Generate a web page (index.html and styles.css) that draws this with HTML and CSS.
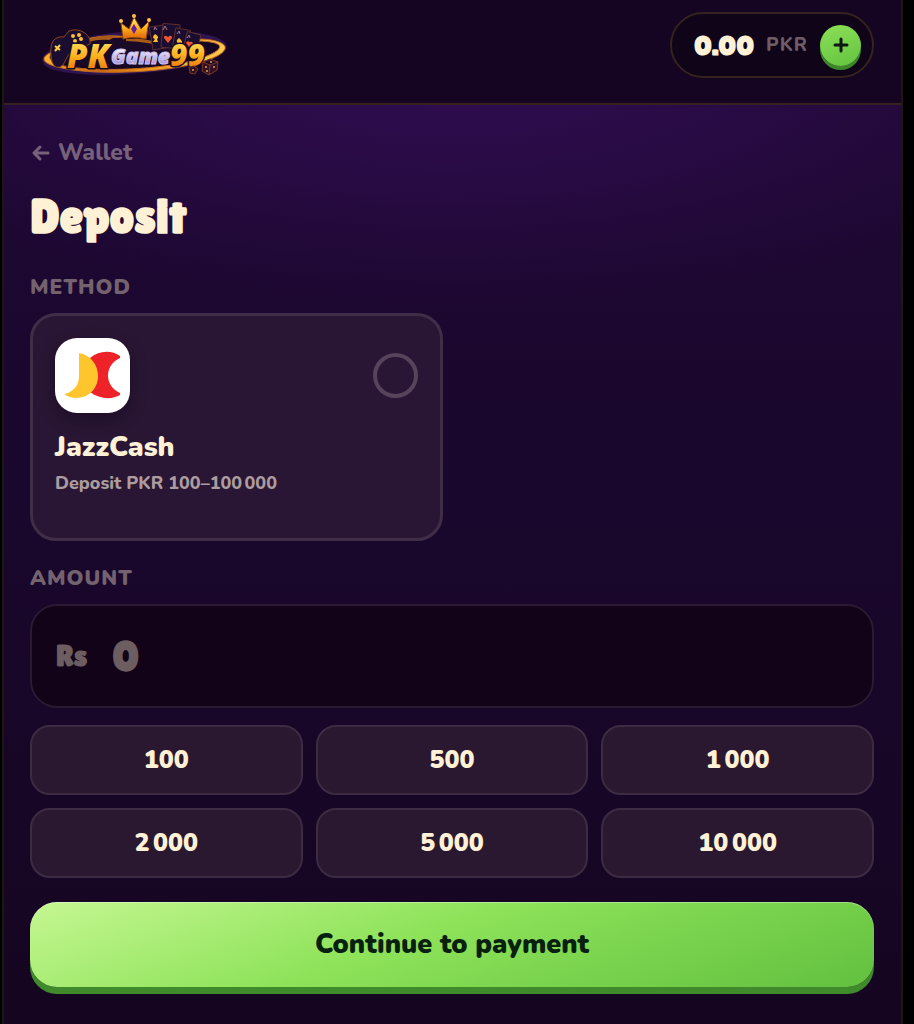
FILE: index.html
```html
<!DOCTYPE html>
<html lang="en">
<head>
<meta charset="utf-8">
<meta name="viewport" content="width=device-width, initial-scale=1">
<title>Deposit – PKGame99</title>
<link rel="stylesheet" href="styles.css">
</head>
<body>
<div class="shell">
  <header class="topbar">
    <a class="brand" href="#" aria-label="PKGame99">
      <svg class="brand-logo" viewBox="0 0 210 80" role="img" aria-hidden="true">
        <defs>
          <linearGradient id="gold" x1="0" y1="0" x2="0" y2="1">
            <stop offset="0.1" stop-color="#ffe56a"/><stop offset=".5" stop-color="#ffb31f"/><stop offset="0.85" stop-color="#e8760f"/>
          </linearGradient>
          <linearGradient id="ring" x1="0" y1="0" x2="1" y2="0">
            <stop offset="0" stop-color="#ffb52e"/><stop offset=".3" stop-color="#c9660f"/><stop offset=".6" stop-color="#f39a20"/><stop offset="1" stop-color="#ffcb4d"/>
          </linearGradient>
          <linearGradient id="silver" x1="0" y1="0" x2="0" y2="1">
            <stop offset="0.2" stop-color="#ffffff"/><stop offset=".5" stop-color="#cfc3ee"/><stop offset="0.9" stop-color="#9180cc"/>
          </linearGradient>
        </defs>
        <path d="M30 42C90 22 178 25 193 39C201 50 155 63 104 66C59 70 16 65 15 56C14 52 20 47 26 45" fill="none" stroke="#2e1450" stroke-width="5"/>
        <path d="M54 35C72 29 94 30 112 35M168 34C184 34 197 38 195 44C190 56 142 66 96 67C53 69 13 62 14 54C14 51 19 48 23 47C17 52 19 57 34 61C62 67 122 65 157 57C178 52 193 45 189 40C185 37 176 36 168 36Z" fill="url(#ring)" stroke="#c06a1c" stroke-width="1"/>
        <path d="M48 42C70 28 120 30 142 44L140 60H44Z" fill="#1a0a28"/>
        <path d="M56 35C66 31 78 30 87 31L79 35C71 34 63 35 56 38ZM96 34Q121 32 140 43Q120 37 96 36Z" fill="#a85a18"/>
        <g fill="#1b0d2f" stroke="#5f3030" stroke-width="1">
          <path d="M23 36Q27 31 34 32L39 26Q47 23 55 28Q61 33 60 39L49 44L39 49L33 60Q26 66 22 57Q19 43 23 36Z" stroke="#8c461c"/>
          <rect x="121" y="21" width="14" height="23" rx="1" transform="rotate(-9 128 32)"/>
          <rect x="132" y="19" width="17" height="24" rx="1" transform="rotate(5 140 31)"/>
          <rect x="144" y="24" width="15" height="22" rx="1" transform="rotate(10 151 34)"/>
          <rect x="155" y="28" width="14" height="20" rx="1" transform="rotate(14 162 37)"/>
        </g>
        <path d="M25 41L30 45M30 40L25 46" stroke="#ffd145" stroke-width="2"/>
        <g fill="#ffbe2e">
          <circle cx="43" cy="31" r="2"/><circle cx="49" cy="30" r="2"/><circle cx="45" cy="36" r="2"/><circle cx="51" cy="34" r="2"/>
          <path d="M125 29Q130 32 127 34L128 37H123L125 34Q121 33 125 29ZM149 33Q154 37 151 39L150 41H146L148 38Q145 36 149 33Z"/>
        </g>
        <path d="M138 38L134 33Q134 29 138 32Q142 29 142 33ZM159 42L156 38Q157 35 160 37Q163 36 163 39Z" fill="#f0552f"/>
        <path d="M124 25l1-3 2 3M133 25l2-4 2 4M147 29l2-3 1 3M157 33l2-3 1 3" fill="none" stroke="#a07a90" stroke-width="1"/>
        <path d="M91 18L99 24L104 12L111 24L119 16L116 34Q103 31 93 34Z" fill="url(#gold)" stroke="#8b4308" stroke-width="1"/>
        <path d="M104 19L107 24L104 29L101 24Z" fill="#682098"/>
        <circle cx="91" cy="16" r="2" fill="#ffc13a"/><circle cx="104" cy="11" r="2" fill="#ffc13a"/><circle cx="119" cy="15" r="2" fill="#ffc13a"/>
        <g stroke="#180a24" stroke-width="3" paint-order="stroke" stroke-linejoin="round">
          <text class="logo-word logo-pk" x="37" y="63" fill="url(#gold)">PK</text>
          <text class="logo-word logo-num" x="140" y="61" fill="url(#gold)">99</text>
        </g>
        <text class="logo-word logo-game" x="81" y="59" fill="url(#silver)" stroke="#cfc3ee">Game</text>
        <g fill="#321025" stroke="#7a3a22" stroke-width="1">
          <path d="M173 57L180 54L188 57L187 65L179 70L172 66ZM173 57L180 60L188 57M180 60L179 70"/>
          <path d="M159 62L164 61L168 64L165 69L160 68Z"/>
        </g>
        <g fill="#e19b50"><circle cx="176" cy="62" r="1"/><circle cx="177" cy="66" r="1"/><circle cx="184" cy="62" r="1"/><circle cx="181" cy="57" r="1"/><circle cx="163" cy="65" r="1"/></g>
      </svg>
    </a>
    <div class="balance">
      <span class="balance-value">0.00</span>
      <span class="balance-unit">PKR</span>
      <button class="balance-add" type="button" aria-label="Add funds">
        <svg viewBox="0 0 16 16" aria-hidden="true"><path d="M8 2V14M2 8H14" fill="none" stroke="currentColor" stroke-width="3" stroke-linecap="round"/></svg>
      </button>
    </div>
  </header>

  <main class="content">
    <a class="back" href="#">
      <svg viewBox="0 0 20 18" aria-hidden="true"><path d="M9 3L3 9L9 15M3 9H17" fill="none" stroke="currentColor" stroke-width="3" stroke-linecap="round" stroke-linejoin="round"/></svg>
      <span>Wallet</span>
    </a>
    <h1 class="title">Deposit</h1>

    <h2 class="label">METHOD</h2>
    <div class="methods">
      <label class="method">
        <span class="method-top">
          <svg class="method-logo" viewBox="0 0 75 75" aria-hidden="true">
            <path d="M35 20C44 12 57 12 65 18V20C49 27 49 48 65 55V57C57 62 44 61 35 54Z" fill="#ee2229"/>
            <path d="M24 15C36 17 43 27 43 38C43 56 25 65 10 57V56C20 53 24 46 24 38Z" fill="#ffc52d"/>
          </svg>
          <input class="method-radio" type="radio" name="method" value="jazzcash">
        </span>
        <span class="method-name">JazzCash</span>
        <span class="method-range">Deposit PKR 100–100&#8239;000</span>
      </label>
    </div>

    <label class="label" for="amount">AMOUNT</label>
    <div class="amount">
      <span class="amount-prefix">Rs</span>
      <input class="amount-input" id="amount" type="text" inputmode="numeric" placeholder="0">
    </div>

    <div class="presets">
      <button class="preset" type="button">100</button>
      <button class="preset" type="button">500</button>
      <button class="preset" type="button">1&#8239;000</button>
      <button class="preset" type="button">2&#8239;000</button>
      <button class="preset" type="button">5&#8239;000</button>
      <button class="preset" type="button">10&#8239;000</button>
    </div>
    <button class="submit" type="button">Continue to payment</button>
  </main>
</div>
</body>
</html>
```
FILE: styles.css
```css
:root {
  --cream: #fff1d6;
  --muted: #75626f;
  --body-font: Nunito, Lato, "Open Sans", sans-serif;
  --display-font: "Lilita One", Lato, "Open Sans", sans-serif;
}

* { box-sizing: border-box; }

body {
  margin: 0;
  padding: 0 11px 0 2px;
  background: #000;
  color: var(--cream);
  font-family: var(--body-font);
  font-weight: 900;
}

button, input { font: inherit; color: inherit; }
button { cursor: pointer; }
a { color: inherit; text-decoration: none; }

.shell {
  min-height: 100vh;
  border: solid #20170f;
  border-width: 0 2px;
  background:
    radial-gradient(ellipse 76% 240px at 50% 70px, #310d52 0%, rgba(49, 13, 82, 0) 100%),
    linear-gradient(#1e0833 0, #1a072d 500px, #180626 800px, #150520 1024px);
}

.topbar {
  display: flex;
  align-items: flex-start;
  justify-content: space-between;
  height: 105px;
  padding: 12px 27px 0 26px;
  border-bottom: 2px solid #36211f;
  background: #160522;
}

.brand { margin-top: -7px; }
.brand-logo { display: block; width: 210px; height: 80px; }
.logo-word { font-family: "Open Sans", sans-serif; font-style: italic; font-weight: 800; }
.logo-pk { font-size: 33px; }
.logo-game { font-size: 21px; }
.logo-num { font-size: 30px; }

.balance {
  display: flex;
  align-items: center;
  gap: 12px;
  height: 66px;
  padding: 0 11px 0 22px;
  border: 2px solid #35231f;
  border-radius: 33px;
  background: #0f0418;
}
.balance-value { font: 900 28px/32px var(--display-font); }
.balance-unit { color: #6c5d66; font-size: 19px; font-weight: 800; letter-spacing: 1px; }
.balance-add {
  display: grid;
  place-items: center;
  width: 41px;
  height: 41px;
  padding: 0;
  border: 0;
  border-radius: 50%;
  background: linear-gradient(160deg, #8ce056, #63c340);
  box-shadow: 0 4px 0 #3d872a;
  color: #0b1710;
}
.balance-add svg { width: 16px; height: 16px; }

.content {
  display: flex;
  flex-direction: column;
  padding: 32px 27px 30px 26px;
}

.back {
  display: inline-flex;
  align-items: center;
  align-self: flex-start;
  gap: 6px;
  color: #75617a;
  font-size: 23px;
  font-weight: 800;
  line-height: 32px;
}
.back svg { width: 22px; height: 18px; }

.title {
  margin: 20px 0 28px;
  font: 900 48px/56px var(--display-font);
}

.label {
  margin: 0 0 12px;
  color: var(--muted);
  font-size: 21px;
  font-weight: 900;
  line-height: 28px;
  letter-spacing: 1px;
}

.methods {
  display: grid;
  grid-template-columns: 1fr 1fr;
  gap: 18px;
  margin-bottom: 23px;
}
.method {
  display: flex;
  flex-direction: column;
  min-height: 228px;
  padding: 22px;
  border: 3px solid #402d47;
  border-radius: 26px;
  background: #291634;
  cursor: pointer;
}
.method-top {
  display: flex;
  align-items: center;
  justify-content: space-between;
  margin-bottom: 16px;
}
.method-logo {
  width: 75px;
  height: 75px;
  border-radius: 22px;
  background: #fff;
  box-shadow: 0 6px 16px rgba(10, 0, 20, .4);
}
.method-radio {
  width: 45px;
  height: 45px;
  margin: 0;
  border: 4px solid #58435c;
  border-radius: 50%;
  appearance: none;
}
.method-radio:checked { background: #7ed957; }
.method-name { font-size: 28px; line-height: 36px; }
.method-range { margin-top: 4px; color: #ac9c9f; font-size: 18px; font-weight: 800; line-height: 28px; }

.amount {
  display: flex;
  align-items: center;
  gap: 25px;
  height: 104px;
  margin-bottom: 17px;
  padding: 0 24px;
  border: 2px solid #2b1a31;
  border-radius: 27px;
  background: #120318;
  color: #6c5d60;
}
.amount-prefix { font: 900 30px/36px var(--display-font); }
.amount-input {
  flex: 1;
  min-width: 0;
  padding: 0;
  border: 0;
  outline: 0;
  background: none;
  font: 900 42px/52px var(--display-font);
}
.amount-input::placeholder { color: #6c5d60; opacity: 1; }

.presets {
  display: grid;
  grid-template-columns: repeat(3, 1fr);
  gap: 13px;
  margin-bottom: 24px;
}
.preset {
  height: 70px;
  padding: 0;
  border: 2px solid #3d2b44;
  border-radius: 20px;
  background: #291830;
  font-size: 25px;
}

.submit {
  height: 85px;
  padding: 0;
  border: 0;
  border-radius: 27px;
  background: linear-gradient(160deg, #c5f792 0%, #8de259 45%, #62c03f 100%);
  box-shadow: 0 7px 0 #3f8a2b, inset 0 1px 0 rgba(255, 255, 255, .35);
  color: #08210f;
  font-size: 27px;
}
```
